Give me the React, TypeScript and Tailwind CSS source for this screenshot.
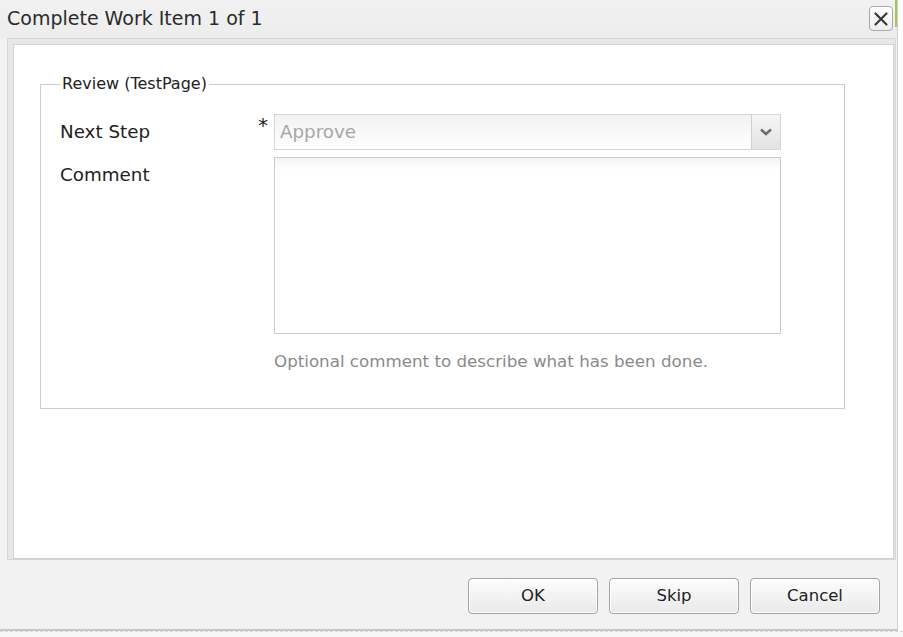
import React from "react";

const font = { fontFamily: '"DejaVu Sans", Verdana, sans-serif' };

function Btn({ label }: { label: string }) {
  return (
    <button className="w-[130px] h-[36px] rounded-[4px] border border-[#a3a3a3] bg-gradient-to-b from-[#fdfdfd] to-[#e9e9e9] text-[16.5px] text-[#222] shadow-[inset_0_0_0_1px_#ffffff]">
      {label}
    </button>
  );
}

export default function App() {
  return (
    <div className="w-[903px] h-[637px] bg-white flex flex-col overflow-hidden" style={font}>
      <div className="flex flex-col w-[898px] border-r border-[#cfcfcf] h-[631px] bg-[#f2f2f2]">
        {/* title bar */}
        <div className="h-[38px] flex items-start bg-gradient-to-b from-[#f1f1f1] to-[#ededed]">
          <div className="pl-[7px] pt-[5px] text-[19px] leading-[26px] text-[#2b2b2b] flex-1">
            Complete Work Item 1 of 1
          </div>
          <div className="mt-[6px] mr-[2px] w-[24px] h-[25px] rounded-[4px] border border-[#a9a9a9] bg-gradient-to-b from-white to-[#eeeeee] flex items-center justify-center">
            <svg width="16" height="16" viewBox="0 0 16 16">
              <path d="M2.5 2.5 L13.5 13.5 M13.5 2.5 L2.5 13.5" stroke="#3a3a3a" strokeWidth="2.2" strokeLinecap="round" />
            </svg>
          </div>
          <div className="w-[2px] h-[27px] bg-[#9cc95a]" />
        </div>
        {/* body */}
        <div className="ml-[7px] mr-[1px] h-[522px] border border-[#d6d6d6] bg-[#e7e7e7] pl-[5px] pt-[5px] pr-[1px] pb-0 flex">
          <div className="flex-1 bg-white border border-[#d2d2d2] pt-[30px] pl-[26px]">
            <fieldset className="w-[805px] h-[334px] border border-[#cdcdcd] pl-[19px] pr-[63px]">
              <legend className="ml-[0px] px-[2px] text-[16px] leading-[18px] text-[#222]">Review (TestPage)</legend>
              <div className="flex items-center mt-[21px] h-[36px]">
                <div className="w-[198px] text-[18.3px] text-[#222]">Next Step</div>
                <div className="w-[16px] self-start pt-[1px] text-[20px] leading-[20px] text-[#222]">*</div>
                <div className="flex-1 h-[36px] flex border border-[#d6d6d6] bg-gradient-to-b from-[#f2f2f2] to-white">
                  <div className="flex-1 pl-[5px] text-[18.3px] leading-[34px] text-[#a7a7a7]">Approve</div>
                  <div className="w-[29px] border-l border-[#d0d0d0] bg-gradient-to-b from-[#f6f6f6] to-[#e2e2e2] flex items-center justify-center">
                    <svg width="14" height="10" viewBox="0 0 14 10">
                      <path d="M2 2.5 L7 7 L12 2.5" stroke="#6e6e6e" strokeWidth="2.6" fill="none" />
                    </svg>
                  </div>
                </div>
              </div>
              <div className="flex mt-[7px]">
                <div className="w-[214px] text-[18.3px] text-[#222] leading-[22px] pt-[7px]">Comment</div>
                <div className="flex-1 flex flex-col">
                  <div className="h-[177px] border border-[#cbcbcb] bg-gradient-to-b from-[#f3f3f3] to-white to-[12px]" />
                  <div className="mt-[16px] text-[16.7px] leading-[22px] text-[#8a8a8a]">
                    Optional comment to describe what has been done.
                  </div>
                </div>
              </div>
            </fieldset>
          </div>
        </div>
        {/* footer */}
        <div className="flex-1 flex items-start justify-end gap-[11px] pr-[17px] pt-[18px] border-b-2 border-[#c6c6c6]">
          <Btn label="OK" />
          <Btn label="Skip" />
          <Btn label="Cancel" />
        </div>
      </div>
      <div className="flex-1 border-t border-dashed border-[#d8d8d8] bg-[#f7f7f7]" />
    </div>
  );
}
